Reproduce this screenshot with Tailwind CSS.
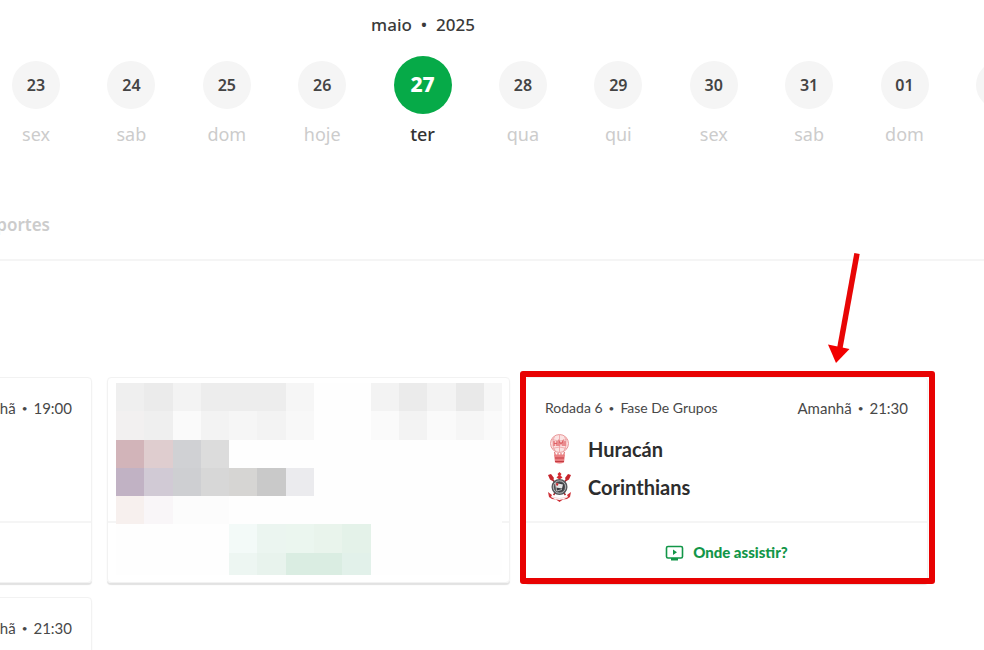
<!DOCTYPE html>
<html lang="pt-BR">
<head>
<meta charset="utf-8">
<title>Agenda de jogos</title>
<script src="https://cdn.jsdelivr.net/npm/@tailwindcss/browser@4"></script>
</head>
<body class="h-screen overflow-hidden bg-white font-['Lato',sans-serif] text-[#484848]">
<header class="font-['Noto_Sans',sans-serif]">
  <h1 class="mr-[138px] pt-3 text-center text-[17px] leading-[26px] font-medium text-[#3a3a3a] whitespace-pre">maio  •  2025</h1>
  <nav aria-label="Dias" class="-mr-10 mt-[18px] flex justify-between pl-3 text-[16px] font-semibold text-[#444]">
    <button class="flex w-12 flex-col items-center"><span class="mt-[5px] flex size-12 items-center justify-center rounded-full bg-[#f5f5f5]">23</span><span class="mt-[13px] text-[18px] leading-6 font-normal text-[#ccc]">sex</span></button>
    <button class="flex w-12 flex-col items-center"><span class="mt-[5px] flex size-12 items-center justify-center rounded-full bg-[#f5f5f5]">24</span><span class="mt-[13px] text-[18px] leading-6 font-normal text-[#ccc]">sab</span></button>
    <button class="flex w-12 flex-col items-center"><span class="mt-[5px] flex size-12 items-center justify-center rounded-full bg-[#f5f5f5]">25</span><span class="mt-[13px] text-[18px] leading-6 font-normal text-[#ccc]">dom</span></button>
    <button class="flex w-12 flex-col items-center"><span class="mt-[5px] flex size-12 items-center justify-center rounded-full bg-[#f5f5f5]">26</span><span class="mt-[13px] text-[18px] leading-6 font-normal text-[#ccc]">hoje</span></button>
    <button aria-current="date" class="flex w-[58px] flex-col items-center"><span class="flex size-[58px] items-center justify-center rounded-full bg-[#06aa48] text-[21px] font-extrabold text-white">27</span><span class="mt-2 text-[18px] leading-6 font-medium text-[#333]">ter</span></button>
    <button class="flex w-12 flex-col items-center"><span class="mt-[5px] flex size-12 items-center justify-center rounded-full bg-[#f5f5f5]">28</span><span class="mt-[13px] text-[18px] leading-6 font-normal text-[#ccc]">qua</span></button>
    <button class="flex w-12 flex-col items-center"><span class="mt-[5px] flex size-12 items-center justify-center rounded-full bg-[#f5f5f5]">29</span><span class="mt-[13px] text-[18px] leading-6 font-normal text-[#ccc]">qui</span></button>
    <button class="flex w-12 flex-col items-center"><span class="mt-[5px] flex size-12 items-center justify-center rounded-full bg-[#f5f5f5]">30</span><span class="mt-[13px] text-[18px] leading-6 font-normal text-[#ccc]">sex</span></button>
    <button class="flex w-12 flex-col items-center"><span class="mt-[5px] flex size-12 items-center justify-center rounded-full bg-[#f5f5f5]">31</span><span class="mt-[13px] text-[18px] leading-6 font-normal text-[#ccc]">sab</span></button>
    <button class="flex w-12 flex-col items-center"><span class="mt-[5px] flex size-12 items-center justify-center rounded-full bg-[#f5f5f5]">01</span><span class="mt-[13px] text-[18px] leading-6 font-normal text-[#ccc]">dom</span></button>
    <button aria-label="Próximo dia" class="flex w-12 flex-col items-center"><span class="mt-[5px] size-12 rounded-full bg-[#f5f5f5]"></span></button>
  </nav>
  <div class="mt-[67px] flex h-[48px] border-b-2 border-[#f5f5f5]">
    <div class="flex w-[50px] justify-end"><button class="h-6 text-[17px] leading-6 font-semibold whitespace-nowrap text-[#ccc]">Esportes</button></div>
  </div>
</header>

<main class="mt-[116px] mr-14 -ml-[311px] grid grid-cols-3 gap-x-[15px] gap-y-[14px] text-[15px]">
  <article class="rounded-[4px] border border-[#f2f2f2] shadow-[0_2px_1px_#e2e2e2]">
    <div class="h-[145px] border-b-2 border-[#f5f5f5] px-[19px] pt-5"><p class="flex items-center justify-end gap-[6px] leading-5">Amanhã <span class="text-[10px]">•</span> 19:00</p></div>
    <div class="h-[59px]"></div>
  </article>

  <article class="rounded-[4px] border border-[#f2f2f2] shadow-[0_2px_1px_#e2e2e2]">
    <div class="grid">
      <div class="col-start-1 row-start-1 h-[145px] border-b-2 border-[#f5f5f5]"></div>
      <svg class="col-start-1 row-start-1 mt-[5px] ml-2 w-[386px]" viewBox="0 0 1364 680" shape-rendering="crispEdges" aria-hidden="true">
        <path fill="#fefefe" d="M0 0h1364v680H0z"/>
        <path fill="#efefef" d="M0 0h100v100H0zM100 100h100v100H100z"/><path fill="#ebebeb" d="M100 0h100v100H100zM1000 0h100v100H1000z"/>
        <path fill="#f3f3f3" d="M200 0h100v100H200zM900 0h100v100H900zM1100 0h100v100H1100z"/><path fill="#ededed" d="M300 0h300v100H300z"/>
        <path fill="#f6f6f6" d="M600 0h100v100H600zM1300 0h64v100h-64zM400 100h100v100H400zM1200 100h100v100H1200z"/><path fill="#e9e9e9" d="M1200 0h100v100H1200z"/>
        <path fill="#f2f0f0" d="M0 100h100v100H0z"/><path fill="#fafafa" d="M200 100h100v100H200zM900 100h100v100H900zM1100 100h100v100H1100zM1300 100h64v100h-64z"/>
        <path fill="#f3f3f3" d="M300 100h100v100H300zM500 100h100v100H500zM1000 100h100v100H1000z"/><path fill="#f8f8f8" d="M600 100h100v100H600z"/>
        <path fill="#d2b4b9" d="M0 200h100v100H0z"/><path fill="#dfcdcf" d="M100 200h100v100H100z"/><path fill="#d0d1d4" d="M200 200h100v100H200z"/><path fill="#dcdcdc" d="M300 200h100v100H300z"/>
        <path fill="#c1b2c4" d="M0 300h100v100H0z"/><path fill="#d1cad5" d="M100 300h100v100H100z"/><path fill="#cecfd2" d="M200 300h100v100H200z"/><path fill="#d7d7d7" d="M300 300h100v100H300z"/><path fill="#d6d5d3" d="M400 300h100v100H400z"/><path fill="#c9c9c9" d="M500 300h100v100H500z"/><path fill="#ebebee" d="M600 300h100v100H600z"/>
        <path fill="#f7f0ee" d="M0 400h100v100H0z"/><path fill="#f9f6f8" d="M100 400h100v100H100z"/><path fill="#fcfcfc" d="M200 400h200v100H200z"/>
        <path fill="#f3faf8" d="M400 500h100v100H400z"/><path fill="#ebf5f0" d="M500 500h100v100H500z"/><path fill="#ebf6ef" d="M600 500h100v100H600z"/><path fill="#e9f4ec" d="M700 500h100v100H700z"/><path fill="#e4f2e9" d="M800 500h100v100H800z"/>
        <path fill="#edf6f2" d="M400 600h100v80H400z"/><path fill="#e8f3ed" d="M500 600h100v80H500z"/><path fill="#daede2" d="M600 600h200v80H600z"/><path fill="#e2f1ea" d="M800 600h100v80H800z"/>
      </svg>
    </div>
  </article>

  <article class="relative rounded-[4px] border border-[#f2f2f2] shadow-[0_2px_1px_#e2e2e2]">
    <div class="h-[145px] border-b-2 border-[#f5f5f5] px-[19px] pt-5">
      <div class="flex justify-between leading-5"><p class="flex items-center gap-[6px] text-[14px]">Rodada 6 <span class="text-[10px]">•</span> Fase De Grupos</p><p class="flex items-center gap-[6px]">Amanhã <span class="text-[10px]">•</span> 21:30</p></div>
      <ul class="mt-3 text-[20px] font-bold text-[#2d2d2d]">
        <li class="flex h-[38px] items-center gap-[15px]">
          <svg class="h-[30px] w-7" viewBox="0 0 28 30" aria-hidden="true">
            <circle cx="14.500" cy="9.500" r="9" fill="#fbe3e3" stroke="#e9989a"/>
            <path d="M14.500 1v17M9.500 2.500q-4 7 1 15M19.500 2.500q4 7-1 15M6.500 5.500q8 3 16 0M7 14.500q7.500-3 15 0" fill="none" stroke="#ec9fa1" stroke-width=".8"/>
            <path d="M7 7.500h15v4.500H7z" fill="#f9c8c9"/>
            <path d="M9 7v5M12 7v5M9 9.500h3M14 12V7l2 3 2-3v5M20 7v5" fill="none" stroke="#de6266" stroke-width="1.200"/>
            <path d="M9.500 18l1 4M19.500 18l-1 4M13 19v3M16 19v3" stroke="#e37a7c" stroke-width="1.200"/>
            <path d="M9 20.500h11l-1 8q-4.500 2-9 0z" fill="#ea7f82"/><path d="M10 24h9M10 27.500h9" stroke="#c33b42"/>
          </svg>Huracán</li>
        <li class="flex h-[38px] items-center gap-[15px]">
          <svg class="h-[30px] w-7" viewBox="0 0 28 30" aria-hidden="true">
            <path d="M7.500 7.500L20.500 23M21.500 7.500L8.500 23" stroke="#a32c31" stroke-width="1.600"/>
            <path d="M3 3l3-1 3 4-1.500 3L5 7.500zM26 3l-3-1-3 4 1.500 3L24 7.500z" fill="#c6242c"/>
            <path d="M14.500 0l2 2-1 1.500 2 2-3 2-3-2 2-2-1-1.500z" fill="#d42a31"/>
            <path d="M3 20l4 3-1 2q8 6 17 0l-1-2 4-3-1 5-3 2-4 .5-3.500 2.500-3.500-2.500L7 27l-3-2z" fill="#cf3239"/>
            <path d="M7 25q7.500 3 15 0" fill="none" stroke="#f3d2d3" stroke-width=".8"/>
            <circle cx="14.500" cy="15" r="8" fill="#55575b"/><circle cx="14.500" cy="15" r="6.200" fill="none" stroke="#b5b6b8"/>
            <circle cx="14.500" cy="15" r="4.800" fill="#3c3e42"/>
            <path d="M10.500 11l7.500 1.500-1 4-6-1z" fill="#e4e4e5"/><path d="M10.500 11l3 .6-.6 2.200-2.300-.5z" fill="#c6242c"/><path d="M12 19l5-1.500M10.500 11l1 8" stroke="#bbb"/>
          </svg>Corinthians</li>
      </ul>
    </div>
    <a href="#" class="flex h-[59px] items-center justify-center gap-[9px] text-[15px] font-black text-[#129648]">
      <svg class="h-4 w-[19px]" viewBox="0 0 19 16" fill="none" aria-hidden="true"><rect x="1.500" y="1.500" width="16" height="11.500" rx="1.500" stroke="currentColor" stroke-width="1.600"/><path d="M6 13h7v2.500H6zM8 4.500l4 2.700-4 2.700z" fill="currentColor"/></svg>
      Onde assistir?
    </a>
    <div class="pointer-events-none absolute -top-[7px] -right-2 -bottom-[2px] -left-[6px] rounded-[3px] border-[6px] border-[#e80202]"></div>
    <svg class="pointer-events-none absolute -top-[125px] right-[67px] h-[112px] w-8" viewBox="0 0 32 112" aria-hidden="true"><path d="M29 .5L11.500 97" stroke="#e80606" stroke-width="5.500"/><path d="M0 91.500L21.500 96 8 110z" fill="#f20000"/></svg>
  </article>

  <article class="h-[207px] rounded-[4px] border border-[#f2f2f2] shadow-[0_2px_1px_#e2e2e2]">
    <div class="h-[145px] border-b-2 border-[#f5f5f5] px-[19px] pt-5"><p class="flex items-center justify-end gap-[6px] leading-5">Amanhã <span class="text-[10px]">•</span> 21:30</p></div>
  </article>
</main>
</body>
</html>
